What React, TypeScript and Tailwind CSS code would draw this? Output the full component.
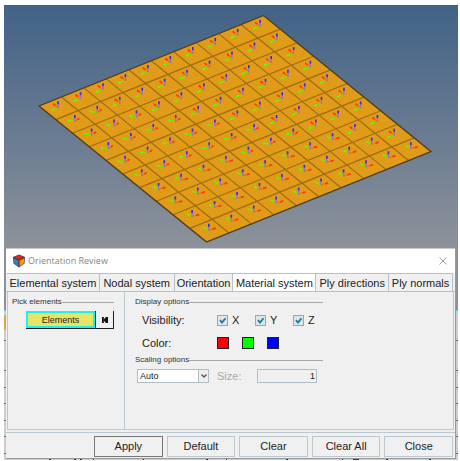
import type { ReactNode } from "react";

const TABS = [
  "Elemental system",
  "Nodal system",
  "Orientation",
  "Material system",
  "Ply directions",
  "Ply normals",
];

const STEPS = Array.from({ length: 11 }, (_, i) => i);
const CELLS = STEPS.slice(0, 10);

/* Corners of the shell mesh: left, top, right, bottom */
const LEFT = [35, 101];
const U = [22.45, -9.05];
const V = [16.75, 13.6];

function point(u: number, v: number): [number, number] {
  return [LEFT[0] + u * U[0] + v * V[0], LEFT[1] + u * U[1] + v * V[1]];
}

function Triad({ u, v }: { u: number; v: number }) {
  const [x, y] = point(u + 0.5, v + 0.5);
  let red = [4.5, -3];
  let green = [-7.5, -1];
  if (v === 0 || u > v) {
    red = [-5, -4];
    green = [-7, 2.5];
  } else if (v > 6 || (v === 6 && u < 4)) {
    red = [7, -2];
    green = [-5.5, -3];
  }
  return (
    <g transform={`translate(${x - 0.5} ${y - 0.5})`}>
      <path d={`M0 0L${green[0]} ${green[1]}`} stroke="#7be000" strokeWidth="1.2" />
      <path d={`M${green[0] * 0.55} ${green[1] * 0.55}L${green[0]} ${green[1]}`} stroke="#62fa00" strokeWidth="1.7" />
      <path d={`M0 0L${red[0]} ${red[1]}`} stroke="#f86a10" strokeWidth="1.1" />
      <path d={`M${red[0] * 0.55} ${red[1] * 0.55}L${red[0]} ${red[1]}`} stroke="#ff3800" strokeWidth="1.7" />
      <path d="M0 0.5V-6" stroke="#a078a8" strokeWidth="1.5" />
      <path d="M0 -3.5V-6.5" stroke="#3a28ee" strokeWidth="1.6" />
    </g>
  );
}

function Mesh() {
  const outline = [point(0, 0), point(10, 0), point(10, 10), point(0, 10)];
  return (
    <svg viewBox="0 0 454 243" className="block w-full" role="img" aria-label="Shell mesh with material axes">
      <polygon points={outline.join(" ")} fill="#e09b19" />
      {STEPS.map((i) => (
        <path
          key={i}
          d={`M${point(i, 0)}L${point(i, 10)}M${point(0, i)}L${point(10, i)}`}
          stroke="#9c6c10"
          strokeWidth="1.2"
        />
      ))}
      <polygon points={outline.join(" ")} fill="none" stroke="#49402c" strokeWidth="1.3" />
      {CELLS.map((v) => CELLS.map((u) => <Triad key={`${u}-${v}`} u={u} v={v} />))}
    </svg>
  );
}

/* Sliver of the window behind the dialog, seen along its side */
function Edge() {
  return (
    <svg viewBox="0 0 2 150" className="h-[150px] w-[2px]" aria-hidden="true">
      <rect width="2" height="1" fill="#30e0e8" />
      {[30, 60, 77, 93, 110, 126, 143].map((y) => (
        <rect key={y} y={y} width="2" height="1" fill="#6c6c6c" />
      ))}
    </svg>
  );
}

function Logo() {
  return (
    <svg viewBox="0 0 14 14" className="size-[14px]" aria-hidden="true">
      <path d="M1 3L7 0.5L13 3L12.5 9.5L7 13.5L1.5 9.5Z" fill="#4a3c38" />
      <path d="M2 3.2L7 1L12 3.2L7 5.6Z" fill="#e3241c" />
      <path d="M1.5 4.2L6.4 6.4V12.4L2.2 9.2Z" fill="#3c7fb4" />
      <path d="M12.5 4.2L7.6 6.4V12.4L11.8 9.2Z" fill="#f39a14" />
    </svg>
  );
}

function Group({ title, children }: { title: string; children: ReactNode }) {
  return (
    <fieldset className="min-w-0">
      <legend className="flex h-3 w-full items-center text-[8px] leading-3 text-[#333]">
        {title}
        <span className="h-px flex-1 bg-[#a8a8a8]" />
      </legend>
      {children}
    </fieldset>
  );
}

function Check({ label }: { label: string }) {
  return (
    <label className="flex w-[38px] shrink-0 items-center gap-1">
      <span className="grid size-[11px] place-items-center">
        <input
          type="checkbox"
          defaultChecked
          className="col-start-1 row-start-1 size-[11px] appearance-none border border-[#9fa5a8] bg-[#dfe5e8]"
        />
        <svg viewBox="0 0 11 11" className="pointer-events-none z-10 col-start-1 row-start-1 size-[11px]" aria-hidden="true">
          <path d="M3 5.2L5 7.6L8.5 3.2" fill="none" stroke="#1d7aa6" strokeWidth="1.8" />
        </svg>
      </span>
      {label}
    </label>
  );
}

function Swatch({ label, color }: { label: string; color: string }) {
  return (
    <span className="flex w-[25px]">
      <button type="button" aria-label={label} className={`size-3 border border-[#222] ${color}`} />
    </span>
  );
}

export default function App() {
  return (
    <main className="bg-white pt-[5px] pr-[2px] pb-[2px] pl-1 font-['Liberation_Sans',Arial,sans-serif]">
      <div className="relative bg-[#cdcdcd]">
        <div className="absolute inset-x-0 top-0 h-[305px] bg-linear-to-b from-[#416287] from-0% via-[#8d9299] via-80% to-[#8d9299]" />
        <div className="absolute inset-x-0 bottom-0 flex justify-between">
          <Edge />
          <Edge />
        </div>
        <div className="absolute bottom-[130px] left-0 h-[15px] w-[2px] bg-[#d8a94a]" />
        <div className="relative">
          <Mesh />
          <section className="mx-[2px] border-r border-b border-[#9a9a9a] bg-[#f0f0f0] text-[11px] text-[#222]" aria-label="Orientation Review">
            <header className="flex h-[25px] items-center gap-[2px] border-t border-[#c8c8c8] bg-white px-[6px] font-['Open_Sans',sans-serif] text-[#858585]">
              <Logo />
              <h1 className="flex-1 text-[9px]">Orientation Review</h1>
              <button type="button" aria-label="Close window" className="grid size-3 place-items-center">
                <svg viewBox="0 0 8 8" className="size-2" aria-hidden="true">
                  <path d="M0.5 0.5L7.5 7.5M7.5 0.5L0.5 7.5" stroke="#909090" strokeWidth="0.9" />
                </svg>
              </button>
            </header>
            <div role="tablist" className="grid grid-cols-[93fr_75fr_59fr_83fr_73fr_64fr] border-b border-[#b5c0c8] pr-[2px] pl-px">
              {TABS.map((tab) => (
                <button
                  key={tab}
                  type="button"
                  role="tab"
                  aria-selected={tab === "Material system"}
                  className="h-[18px] border-t border-r border-[#b5c0c8] text-center leading-4 whitespace-nowrap aria-selected:bg-white"
                >
                  {tab}
                </button>
              ))}
            </div>
            <div className="mx-px grid h-[138px] grid-cols-[117px_1fr] border-x border-b border-[#bcc8cf]">
              <div className="border-r border-[#bcc8cf] py-1 pr-[10px] pl-1">
                <Group title="Pick elements">
                  <div className="mt-[3px] ml-[14px] flex h-[18px] border-r border-b border-[#222]">
                    <button type="button" className="flex-1 border-2 border-[#1cf0f0] bg-[#e6e566] text-[9px] leading-3 text-[#222]">
                      Elements
                    </button>
                    <button type="button" aria-label="Reset selection" className="grid w-[18px] place-items-center border-l border-[#222]">
                      <svg viewBox="0 0 6 6" className="size-[6px]" aria-hidden="true">
                        <path d="M0 0H1.8V2.4L4 0H6V6H4L1.8 3.6V6H0Z" fill="#111" />
                      </svg>
                    </button>
                  </div>
                </Group>
              </div>
              <div className="w-[198px] py-1 pl-[10px]">
                <Group title="Display options">
                  <div className="ml-[7px] flex h-6 items-center">
                    <span className="w-[75px] shrink-0">Visibility:</span>
                    <Check label="X" />
                    <Check label="Y" />
                    <Check label="Z" />
                  </div>
                  <div className="ml-[7px] flex h-[22px] items-center">
                    <span className="w-[75px] shrink-0">Color:</span>
                    <Swatch label="X axis color" color="bg-[#ff0000]" />
                    <Swatch label="Y axis color" color="bg-[#00ff00]" />
                    <Swatch label="Z axis color" color="bg-[#0000ff]" />
                  </div>
                </Group>
                <Group title="Scaling options">
                  <div className="mt-[2px] ml-[2px] flex items-center">
                    <div className="grid h-[14px] w-[72px] items-center border border-[#b0bec6] bg-white">
                      <select
                        aria-label="Scaling mode"
                        className="col-start-1 row-start-1 h-3 appearance-none pl-[2px] text-[9px] leading-3"
                      >
                        <option>Auto</option>
                      </select>
                      <span className="pointer-events-none z-10 col-start-1 row-start-1 grid h-3 w-[10px] place-items-center justify-self-end border-l border-[#b0bec6] bg-[#eee]">
                        <svg viewBox="0 0 6 4" className="h-1 w-[6px]" aria-hidden="true">
                          <path d="M0.5 0.5L3 3L5.5 0.5" fill="none" stroke="#555" strokeWidth="1.4" />
                        </svg>
                      </span>
                    </div>
                    <label htmlFor="size" className="ml-2 w-[40px] text-[#a8a8a8]">
                      Size:
                    </label>
                    <input
                      id="size"
                      defaultValue="1"
                      className="h-[14px] w-[60px] border border-[#b0bec6] bg-[#f0f0f0] pr-px text-right text-[9px]"
                    />
                  </div>
                </Group>
              </div>
            </div>
            <footer className="mt-[2px] flex justify-end gap-1 border-t border-[#bcc8cf] pt-[3px] pr-[2px] pb-px pl-[88px]">
              {["Apply", "Default", "Clear", "Clear All", "Close"].map((name) => (
                <button
                  key={name}
                  type="button"
                  className="h-[21px] flex-1 border border-[#bcc8cf] first:border-[#777]"
                >
                  {name}
                </button>
              ))}
            </footer>
          </section>
          <svg viewBox="0 0 454 1" className="block h-px w-full" aria-hidden="true">
            <path
              d="M45 0.5h2M70 0.5h2M76 0.5h2M89 0.5h1M139 0.5h1M202 0.5h2M222 0.5h1M282 0.5h2M338 0.5h1M349 0.5h6M382 0.5h2M425 0.5h2"
              stroke="#333"
            />
          </svg>
        </div>
      </div>
    </main>
  );
}
